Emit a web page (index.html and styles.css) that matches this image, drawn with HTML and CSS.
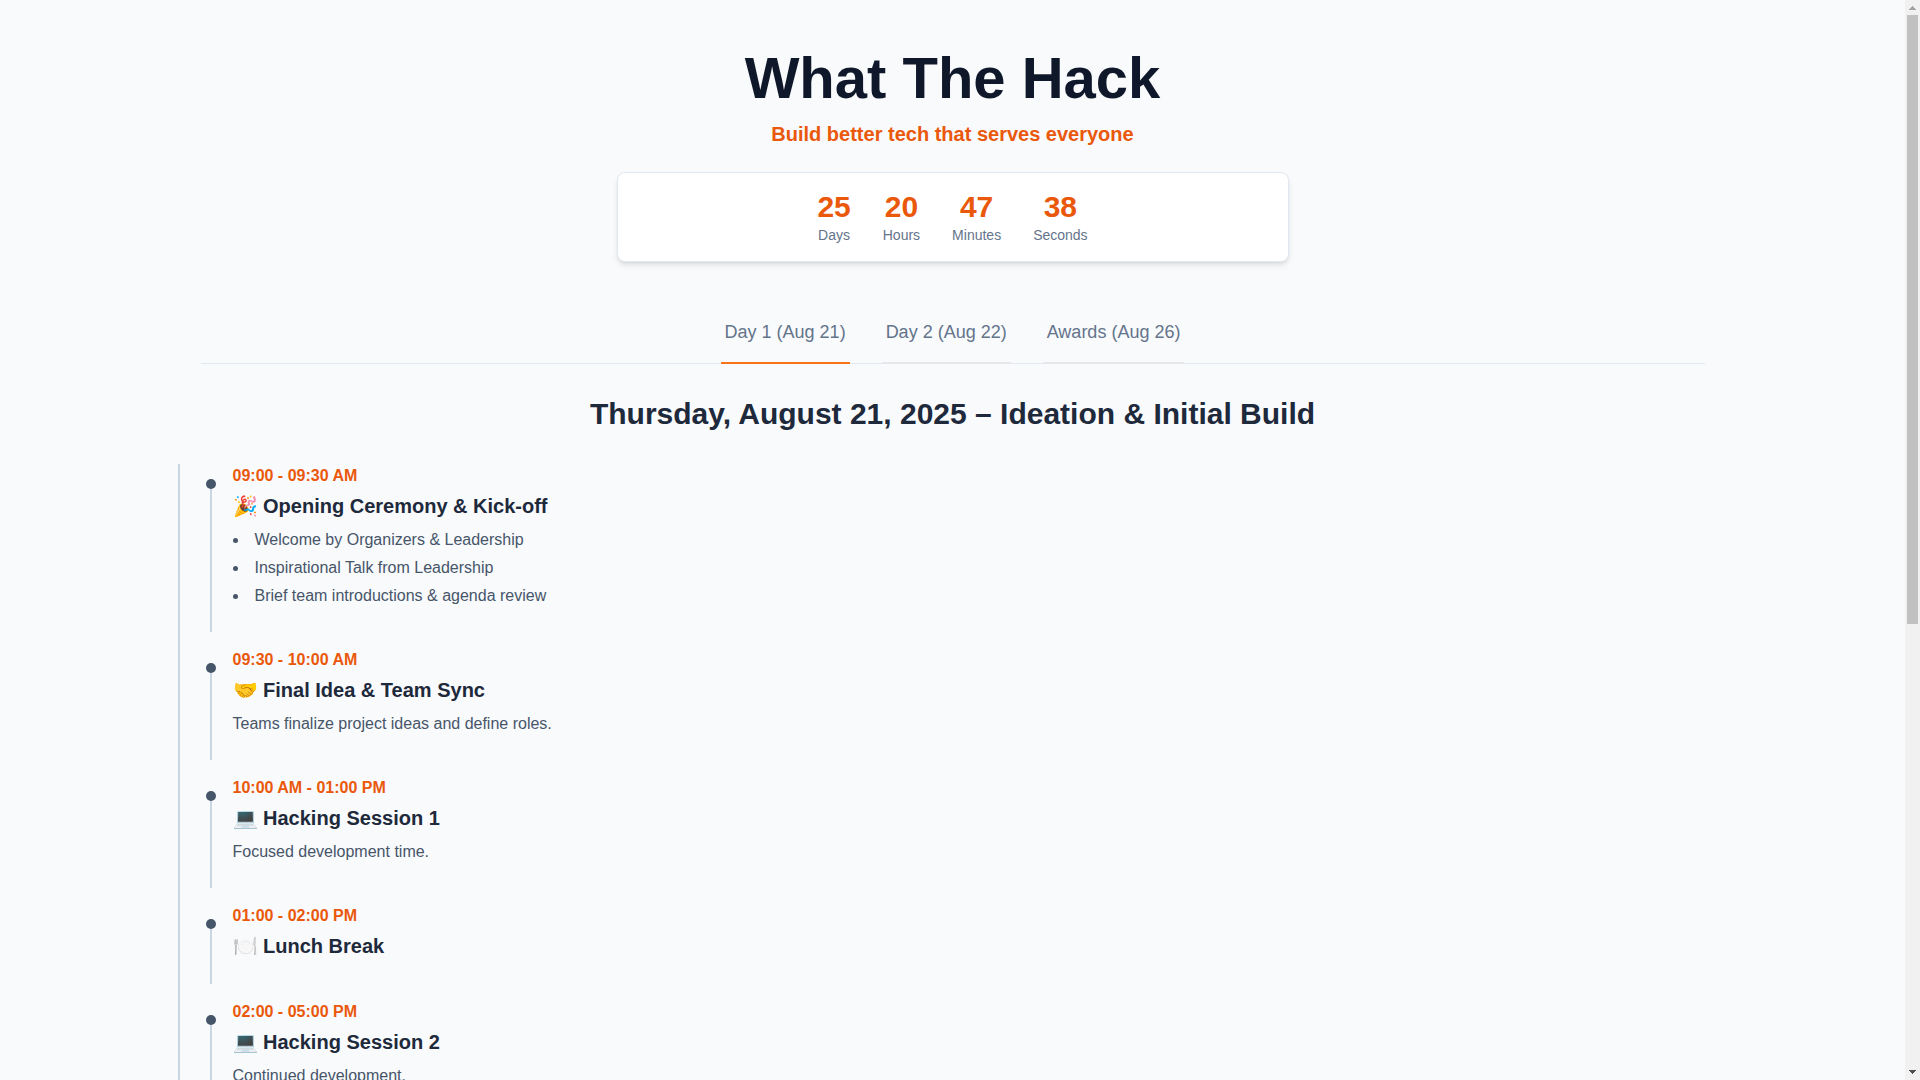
FILE: index.html
```html
<!DOCTYPE html>
<html lang="en">
<head>
  <meta charset="UTF-8" />
  <meta name="viewport" content="width=device-width, initial-scale=1.0" />
  <title>What The Hack</title>
  <link rel="stylesheet" href="styles.css">
</head>
<body>
  <div class="page">
    <div class="container">
      <header class="header">
        <h1>What The Hack</h1>
        <p class="tagline">Build better tech that serves everyone</p>
        <div class="countdown">
          <div class="unit"><span class="number">25</span><span class="label">Days</span></div>
          <div class="unit"><span class="number">20</span><span class="label">Hours</span></div>
          <div class="unit"><span class="number">47</span><span class="label">Minutes</span></div>
          <div class="unit"><span class="number">38</span><span class="label">Seconds</span></div>
        </div>
      </header>

      <nav class="tabs">
        <button type="button" class="tab active">Day 1 (Aug 21)</button>
        <button type="button" class="tab">Day 2 (Aug 22)</button>
        <button type="button" class="tab">Awards (Aug 26)</button>
      </nav>

      <main>
        <h2>Thursday, August 21, 2025 – Ideation &amp; Initial Build</h2>

        <div class="timeline">
          <section class="event">
            <p class="time">09:00 - 09:30 AM</p>
            <h3>🎉 Opening Ceremony &amp; Kick-off</h3>
            <ul>
              <li>Welcome by Organizers &amp; Leadership</li>
              <li>Inspirational Talk from Leadership</li>
              <li>Brief team introductions &amp; agenda review</li>
            </ul>
          </section>

          <section class="event">
            <p class="time">09:30 - 10:00 AM</p>
            <h3>🤝 Final Idea &amp; Team Sync</h3>
            <p class="details">Teams finalize project ideas and define roles.</p>
          </section>

          <section class="event">
            <p class="time">10:00 AM - 01:00 PM</p>
            <h3>💻 Hacking Session 1</h3>
            <p class="details">Focused development time.</p>
          </section>

          <section class="event">
            <p class="time">01:00 - 02:00 PM</p>
            <h3>🍽️ Lunch Break</h3>
          </section>

          <section class="event">
            <p class="time">02:00 - 05:00 PM</p>
            <h3>💻 Hacking Session 2</h3>
            <p class="details">Continued development.</p>
          </section>
        </div>
      </main>
    </div>
  </div>

  <div class="scrollbar" aria-hidden="true">
    <svg class="arrow arrow-up" viewBox="0 0 15 15" shape-rendering="crispEdges">
      <path d="M7 6h1v1h1v1h1v1h1v1H4V9h1V8h1V7h1z" />
    </svg>
    <div class="track"><div class="thumb"></div></div>
    <svg class="arrow arrow-down" viewBox="0 0 15 15" shape-rendering="crispEdges">
      <path d="M4 5h7v1h-1v1H9v1H8v1H7V8H6V7H5V6H4z" />
    </svg>
  </div>
</body>
</html>
```
FILE: styles.css
```css
* {
  box-sizing: border-box;
  margin: 0;
  padding: 0;
}
body {
  display: flex;
  height: 100vh;
  overflow: hidden;
  font-family: "Liberation Sans", Arial, sans-serif;
  font-size: 16px;
  line-height: 24px;
  background: #f8fafc;
  color: #1e293b;
}
.page {
  flex: 1;
  overflow-y: auto;
  scrollbar-width: none;
}
.container {
  max-width: 1536px;
  margin: 0 auto;
  padding: 48px 16px;
}
.header {
  text-align: center;
  margin-bottom: 40px;
}
h1 {
  font-size: 58px;
  line-height: 60px;
  color: #0f172a;
}
.tagline {
  margin-top: 12px;
  font-size: 20px;
  line-height: 28px;
  font-weight: bold;
  color: #ea580c;
}
.countdown {
  display: flex;
  justify-content: center;
  gap: 32px;
  max-width: 672px;
  margin: 24px auto 0;
  padding: 16px;
  background: #fff;
  border: 1px solid #e2e8f0;
  border-radius: 8px;
  box-shadow: 0 4px 6px -1px rgba(0, 0, 0, 0.1), 0 2px 4px -2px rgba(0, 0, 0, 0.1);
}
.unit {
  display: flex;
  flex-direction: column;
}
.number {
  font-size: 30px;
  line-height: 36px;
  font-weight: bold;
  color: #ea580c;
}
.label {
  font-size: 14px;
  line-height: 20px;
  color: #64748b;
}
.tabs {
  display: flex;
  justify-content: center;
  gap: 32px;
  margin-bottom: 32px;
  border-bottom: 1px solid #e2e8f0;
}
.tab {
  margin-bottom: -1px;
  padding: 16px 4px;
  font-family: inherit;
  font-size: 18px;
  line-height: 28px;
  color: #64748b;
  background: none;
  border: none;
  border-bottom: 2px solid #e5e7eb;
  cursor: pointer;
}
.tab:hover {
  color: #ea580c;
}
.tab.active {
  border-bottom-color: #f97316;
}
h2 {
  margin-bottom: 32px;
  font-size: 30px;
  line-height: 36px;
  text-align: center;
}
.timeline {
  margin-left: -23px;
  padding-left: 21px;
  border-left: 2px solid #cbd5e1;
}
.event {
  position: relative;
  margin-bottom: 16px;
  padding: 0 0 24px 32px;
}
/* connector line and dot */
.event::before {
  content: "";
  position: absolute;
  top: 16px;
  bottom: 0;
  left: 9px;
  width: 2px;
  background: #cbd5e1;
}
.event::after {
  content: "";
  position: absolute;
  top: 15px;
  left: 5px;
  width: 10px;
  height: 10px;
  border-radius: 50%;
  background: #475569;
}
.time {
  font-weight: bold;
  color: #ea580c;
}
h3 {
  margin-top: 4px;
  font-size: 20px;
  line-height: 28px;
}
.details,
.event ul {
  margin-top: 8px;
  color: #475569;
}
.event ul {
  list-style: disc inside;
}
.event li + li {
  margin-top: 4px;
}
.scrollbar {
  display: flex;
  flex-direction: column;
  width: 15px;
  background: #f1f1f1;
}
.arrow {
  width: 15px;
  height: 15px;
}
.arrow-up {
  fill: #a3a3a3;
}
.arrow-down {
  fill: #505050;
}
.track {
  flex: 1;
  padding: 0 2px;
}
.thumb {
  height: 58%;
  background: #c1c1c1;
}
```
